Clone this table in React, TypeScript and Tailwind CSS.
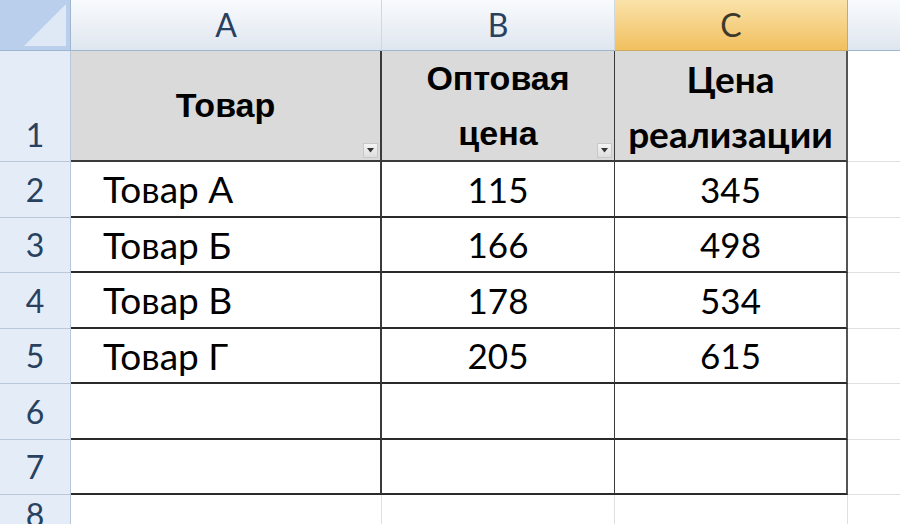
const calibri = "font-['Lato','Open_Sans',sans-serif]";
const arial = "font-['Liberation_Sans',Arial,sans-serif]";

const rows = [
  { n: 2, name: 'Товар А', opt: '115', price: '345', h: 'h-[56px]' },
  { n: 3, name: 'Товар Б', opt: '166', price: '498', h: 'h-[55px]' },
  { n: 4, name: 'Товар В', opt: '178', price: '534', h: 'h-[56px]' },
  { n: 5, name: 'Товар Г', opt: '205', price: '615', h: 'h-[55px]' },
  { n: 6, name: '', opt: '', price: '', h: 'h-[56px]' },
  { n: 7, name: '', opt: '', price: '', h: 'h-[55px]' },
];

function FilterButton() {
  return (
    <div className="absolute right-[2px] bottom-[2px] w-[15px] h-[15px] border border-[#c8c8c8] bg-gradient-to-b from-[#f4f4f4] to-[#dedede] flex items-center justify-center">
      <svg width="7" height="5" viewBox="0 0 7 5">
        <path d="M0 0h7L3.5 4.5z" fill="#333" />
      </svg>
    </div>
  );
}

function RowHeader({ n, h, align = 'center' }: { n: number; h: string; align?: 'center' | 'bottom' }) {
  return (
    <div
      className={`${h} w-[71px] shrink-0 bg-[#e4ecf7] border-r border-r-[#b8c8da] border-b border-b-[#b8c8da] flex justify-center ${
        align === 'bottom' ? 'items-end pb-[10px]' : 'items-center'
      } ${calibri} text-[32px] text-[#27415f] leading-none`}
    >
      <span>{n}</span>
    </div>
  );
}

export default function App() {
  return (
    <div className="w-[900px] h-[524px] overflow-hidden bg-white select-none">
      {/* Column headers */}
      <div className="flex h-[51px]">
        <div className="relative w-[71px] shrink-0 bg-[#b9cfec] border-r border-r-[#9eb6ce] border-b border-b-[#9eb6ce] overflow-hidden">
          <svg className="absolute inset-0" width="70" height="50" viewBox="0 0 70 50">
            <path d="M66 4 L66 46 L24 46 Z" fill="#dfe8f5" />
          </svg>
        </div>
        <div className={`w-[311px] shrink-0 bg-gradient-to-b from-[#f9fbfd] to-[#dfe6ef] border-r border-r-[#d0d9e3] border-b border-b-[#9eb6ce] flex items-center justify-center ${calibri} text-[32px] text-[#27415f]`}>
          A
        </div>
        <div className={`w-[233px] shrink-0 bg-gradient-to-b from-[#f9fbfd] to-[#dfe6ef] border-r border-r-[#d0d9e3] border-b border-b-[#9eb6ce] flex items-center justify-center ${calibri} text-[32px] text-[#27415f]`}>
          B
        </div>
        <div className={`w-[233px] shrink-0 bg-gradient-to-b from-[#fae2a8] to-[#f1c05e] border-r border-r-[#c9a964] border-b border-b-[#c9a964] flex items-center justify-center ${calibri} text-[32px] text-[#3d3a2c]`}>
          C
        </div>
        <div className="flex-1 bg-gradient-to-b from-[#f9fbfd] to-[#dfe6ef] border-b border-b-[#9eb6ce]" />
      </div>

      {/* Row 1: table header */}
      <div className="flex h-[111px]">
        <RowHeader n={1} h="h-[111px]" align="bottom" />
        <div className={`relative w-[311px] shrink-0 bg-[#dadada] border-r-2 border-r-[#3a3a3a] border-b-2 border-b-[#3a3a3a] flex items-center justify-center ${arial} font-bold text-[34px] text-black`}>
          Товар
          <FilterButton />
        </div>
        <div className={`relative w-[233px] shrink-0 bg-[#dadada] border-r border-r-[#3a3a3a] border-b-2 border-b-[#3a3a3a] flex flex-col items-center justify-center ${arial} font-bold text-[34px] leading-[55px] text-black`}>
          <span>Оптовая</span>
          <span>цена</span>
          <FilterButton />
        </div>
        <div className={`w-[233px] shrink-0 bg-[#dadada] border-r-2 border-r-[#555] border-b-2 border-b-[#3a3a3a] flex flex-col items-center justify-center ${calibri} font-bold text-[37px] leading-[55px] text-black`}>
          <span>Цена</span>
          <span>реализации</span>
        </div>
        <div className="flex-1 border-b border-b-[#e0e0e0]" />
      </div>

      {/* Data rows */}
      {rows.map((r) => (
        <div key={r.n} className={`flex ${r.h}`}>
          <RowHeader n={r.n} h={r.h} />
          <div className={`w-[311px] shrink-0 border-r-2 border-r-[#3a3a3a] border-b-2 border-b-[#2a2a2a] flex items-center pl-[32px] ${calibri} text-[37px] text-black`}>
            {r.name}
          </div>
          <div className={`w-[233px] shrink-0 border-r border-r-[#3a3a3a] border-b-2 border-b-[#2a2a2a] flex items-center justify-center ${calibri} text-[35px] text-black`}>
            {r.opt}
          </div>
          <div className={`w-[233px] shrink-0 border-r-2 border-r-[#555] border-b-2 border-b-[#2a2a2a] flex items-center justify-center ${calibri} text-[35px] text-black`}>
            {r.price}
          </div>
          <div className="flex-1 border-b border-b-[#e0e0e0]" />
        </div>
      ))}

      {/* Row 8 (partially visible) */}
      <div className="flex h-[40px]">
        <RowHeader n={8} h="h-[40px]" />
        <div className="w-[311px] shrink-0 border-r border-r-[#e0e0e0]" />
        <div className="w-[233px] shrink-0 border-r border-r-[#e0e0e0]" />
        <div className="w-[233px] shrink-0 border-r border-r-[#e0e0e0]" />
        <div className="flex-1" />
      </div>
    </div>
  );
}
